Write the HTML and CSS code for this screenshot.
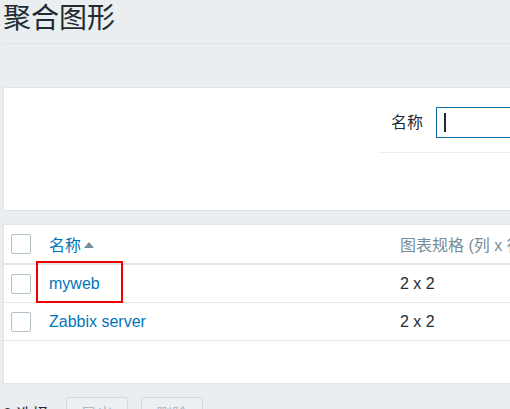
FILE: index.html
```html
<!DOCTYPE html>
<html lang="zh">
<head>
<meta charset="utf-8">
<title>聚合图形</title>
<link rel="stylesheet" href="styles.css">
</head>
<body>
<div class="wrap">
  <header class="page-header">
    <h1>聚合图形</h1>
  </header>

  <div class="filter">
    <div class="filter-spacer"></div>
    <div class="filter-col">
      <div class="form-row">
        <label class="form-label">名称</label>
        <div class="text-input"><span class="caret"></span></div>
      </div>
    </div>
  </div>

  <div class="table-box">
    <div class="row head">
      <div class="cell-check"><span class="checkbox"></span></div>
      <div class="cell-name"><a class="link">名称</a><span class="sort-arrow"></span></div>
      <div class="cell-size head-gray">图表规格 (列 x 行)</div>
    </div>
    <div class="row">
      <div class="cell-check"><span class="checkbox"></span></div>
      <div class="cell-name"><a class="link">myweb</a></div>
      <div class="cell-size">2 x 2</div>
    </div>
    <div class="row">
      <div class="cell-check"><span class="checkbox"></span></div>
      <div class="cell-name"><a class="link">Zabbix server</a></div>
      <div class="cell-size">2 x 2</div>
    </div>
    <div class="highlight"></div>
  </div>

  <div class="actions">
    <span class="selected-count">0 选择</span>
    <button class="btn" disabled>导出</button>
    <button class="btn" disabled>删除</button>
  </div>
</div>
</body>
</html>
```

FILE: styles.css
```css
html, body {
  margin: 0;
  padding: 0;
  background: #ebeef0;
  overflow: hidden;
}

body {
  font-family: "Liberation Sans", Arial, "Noto Sans CJK SC", sans-serif;
  font-size: 16px;
  color: #1f2c33;
}

.wrap {
  width: 900px;
  padding-left: 3px;
}

.page-header {
  padding: 4px 0 9px;
  border-bottom: 1px solid #dfe4e7;
}

.page-header h1 {
  margin: 0;
  font-size: 28px;
  font-weight: normal;
  line-height: 30px;
  color: #1f2c33;
}

.filter {
  margin-top: 43px;
  height: 122px;
  background: #ffffff;
  border: 1px solid #dfe4e7;
  display: grid;
  grid-template-columns: 375px 1fr;
}

.form-row {
  display: flex;
  align-items: center;
  gap: 13px;
  padding: 19px 0 14px 12px;
  border-bottom: 1px solid #ebeef0;
}

.form-label {
  font-size: 16px;
  line-height: 20px;
  color: #1f2c33;
}

.text-input {
  box-sizing: border-box;
  width: 300px;
  height: 31px;
  border: 1px solid #0e6aa3;
  background: #fff;
  padding: 5px 0 0 7px;
}

.caret {
  display: block;
  width: 2px;
  height: 19px;
  background: #1f2c33;
}

.table-box {
  position: relative;
  margin-top: 13px;
  background: #fff;
  border: 1px solid #dfe4e7;
  padding-bottom: 42px;
}

.row {
  display: grid;
  grid-template-columns: 45px 351px auto;
  align-items: center;
  height: 37px;
  border-bottom: 1px solid #e6e9ec;
  white-space: nowrap;
}

.row.head {
  height: 38px;
  border-bottom: 2px solid #dfe4e7;
}

.cell-check {
  padding-left: 7px;
  display: flex;
  align-items: center;
}

.checkbox {
  box-sizing: border-box;
  width: 20px;
  height: 20px;
  border: 1px solid #b4c1c8;
  border-radius: 2px;
  background: #fff;
}

.cell-name {
  display: flex;
  align-items: center;
}

.link {
  color: #0275b8;
  text-decoration: none;
}

.sort-arrow {
  margin-left: 3px;
  margin-top: 1px;
  width: 0;
  height: 0;
  border-left: 5px solid transparent;
  border-right: 5px solid transparent;
  border-bottom: 6px solid #768d99;
}

.head-gray {
  color: #768d99;
}

.highlight {
  position: absolute;
  left: 32px;
  top: 36px;
  width: 87px;
  height: 42px;
  box-sizing: border-box;
  border: 2px solid #f00000;
}

.actions {
  margin-top: 13px;
  display: flex;
  align-items: center;
}

.selected-count {
  width: 63px;
  color: #1f2c33;
}

.btn {
  box-sizing: border-box;
  width: 62px;
  height: 32px;
  margin-right: 13px;
  padding: 0;
  font-family: inherit;
  font-size: 16px;
  color: #acbbc2;
  background: #edf0f2;
  border: 1px solid #d4dadd;
  border-radius: 2px;
}
```
